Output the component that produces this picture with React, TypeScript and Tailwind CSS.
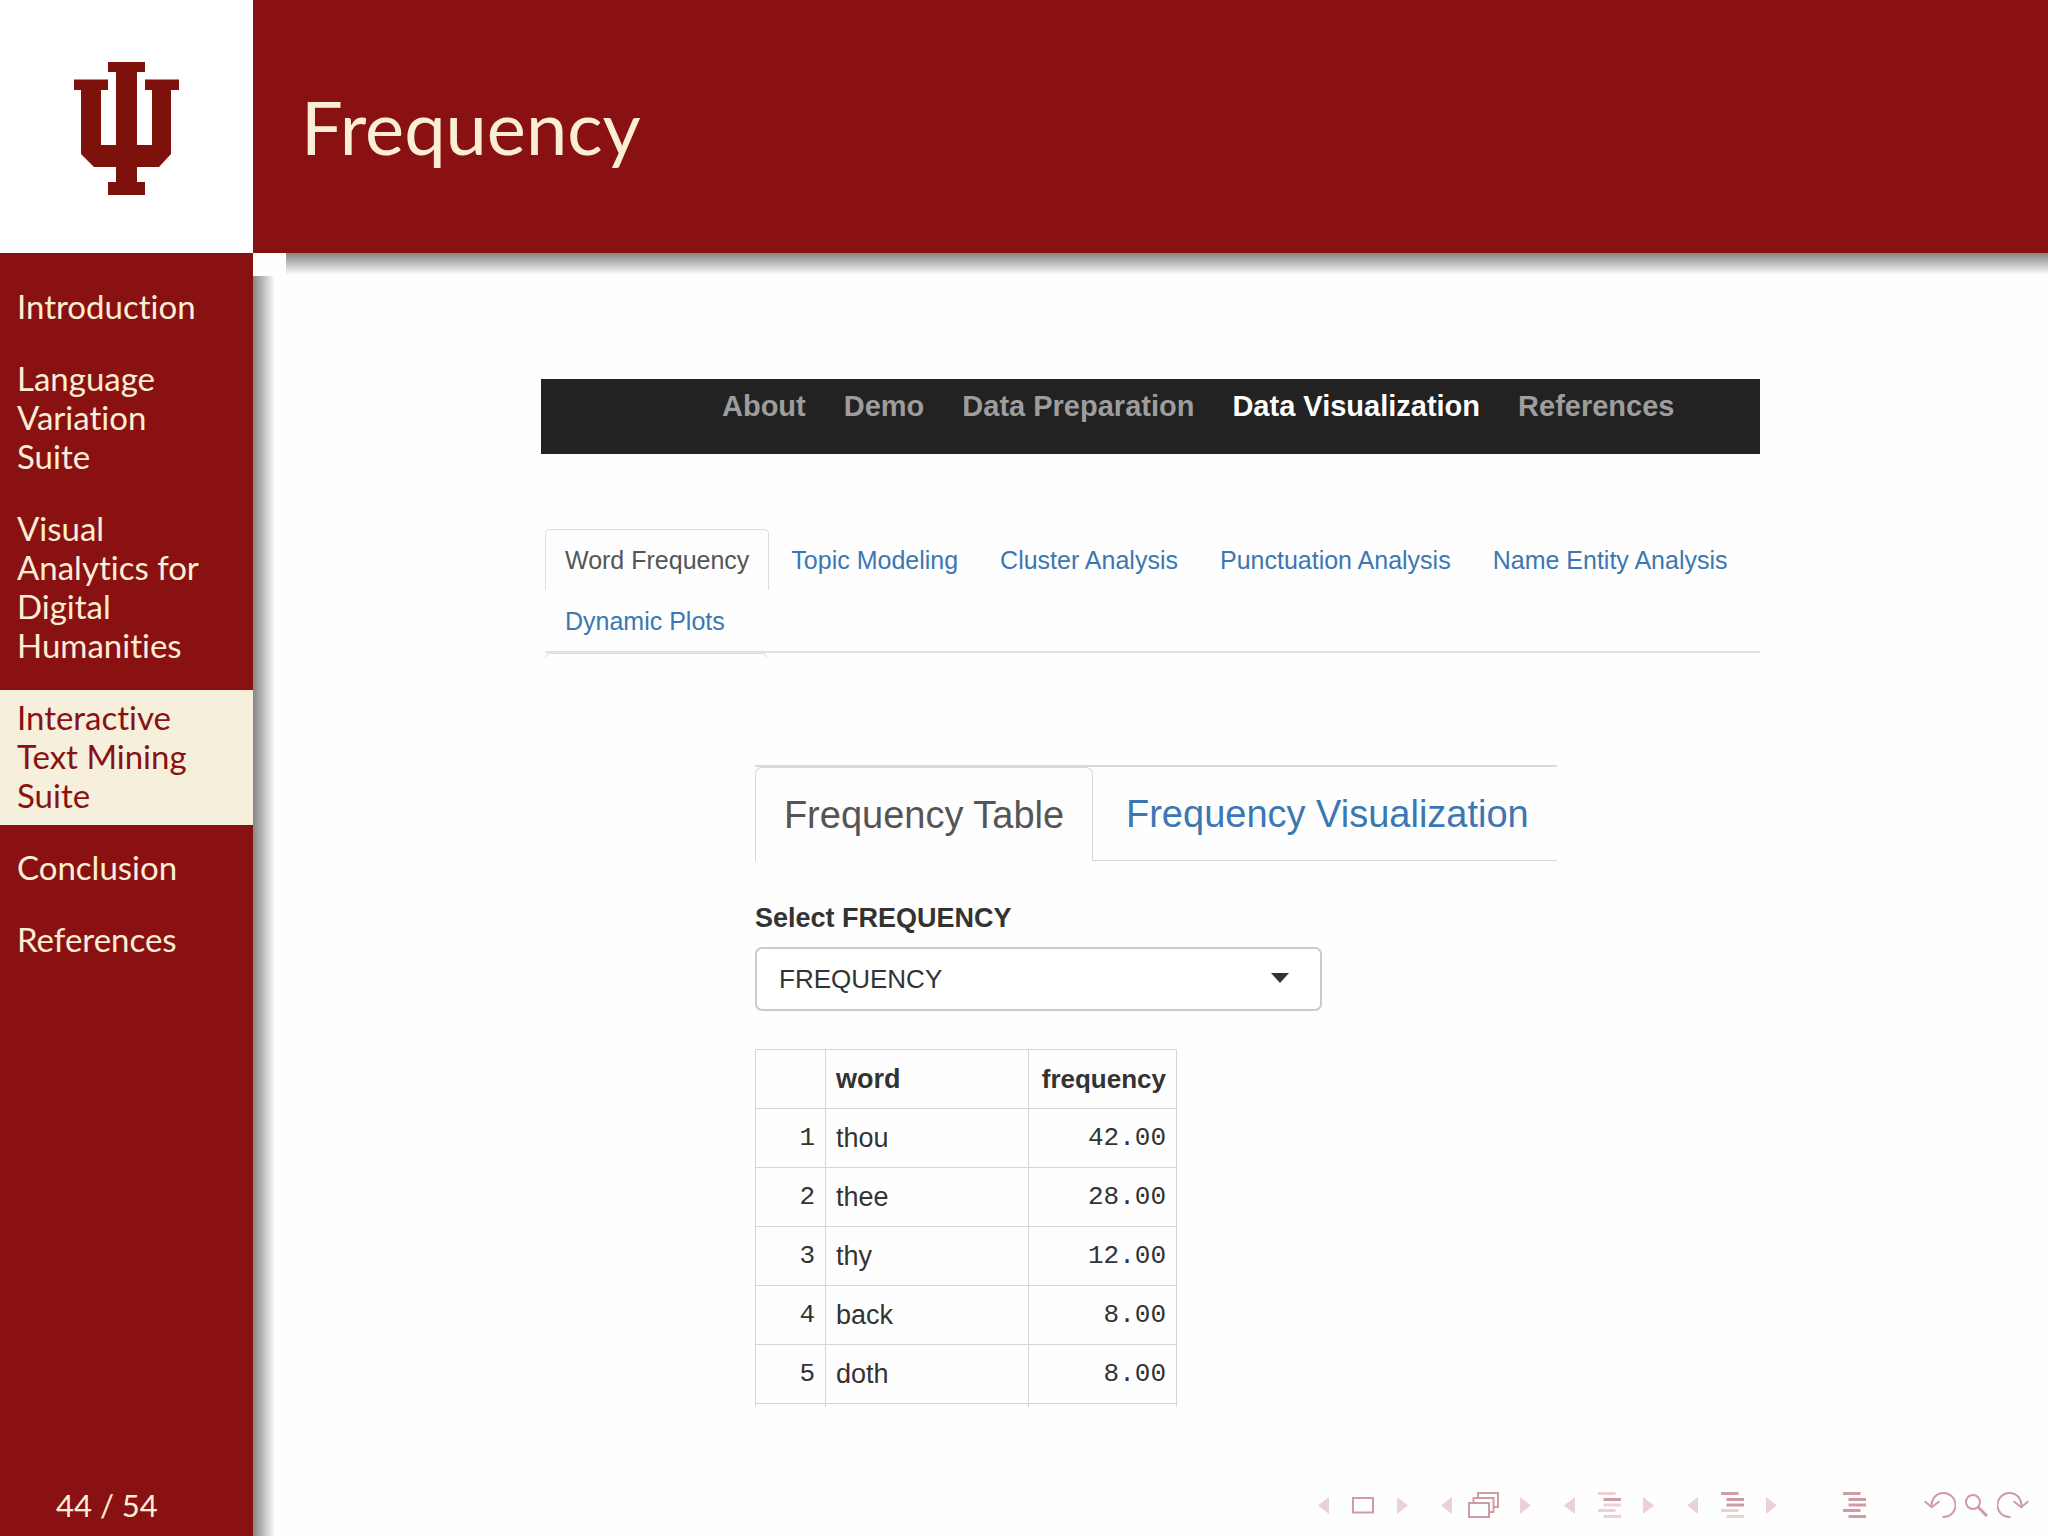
import React, { useState } from 'react';

type Section = { id: string; title: string };

const sections: Section[] = [
  { id: 'intro', title: 'Introduction' },
  { id: 'lvs', title: 'Language Variation Suite' },
  { id: 'visual', title: 'Visual Analytics for Digital Humanities' },
  { id: 'itms', title: 'Interactive Text Mining Suite' },
  { id: 'conclusion', title: 'Conclusion' },
  { id: 'references', title: 'References' },
];

const menuItems = ['About', 'Demo', 'Data Preparation', 'Data Visualization', 'References'];

const analysisTabs = [
  'Word Frequency',
  'Topic Modeling',
  'Cluster Analysis',
  'Punctuation Analysis',
  'Name Entity Analysis',
  'Dynamic Plots',
];

const rows = [
  { word: 'thou', frequency: '42.00' },
  { word: 'thee', frequency: '28.00' },
  { word: 'thy', frequency: '12.00' },
  { word: 'back', frequency: '8.00' },
  { word: 'doth', frequency: '8.00' },
];

const LIGHT = '#ebd0d5';
const DARK = '#cf9ca3';

function Logo() {
  return (
    <svg width="105" height="133" viewBox="0 0 105 133" fill="#7d110c" role="img" aria-label="Indiana University">
      <path d="M34 0H71V10H63V83H78V28H71V17.5H105V28H97V92L85 105H63V120H71V133H34V120H42V105H20L7 92V28H0V17.5H34V28H27V83H42V10H34Z" />
    </svg>
  );
}

function Header({ title }: { title: string }) {
  return (
    <header className="flex h-[253px]">
      <div className="flex w-[253px] shrink-0 items-center justify-center bg-white pt-1">
        <Logo />
      </div>
      <div className="flex flex-1 items-center bg-[#8a1112] pl-[48px]">
        <h1 className="text-[74px] leading-[96px] text-[#fbeed6]">{title}</h1>
      </div>
    </header>
  );
}

function Sidebar() {
  const [active, setActive] = useState('itms');

  return (
    <aside className="flex w-[253px] shrink-0 flex-col justify-between bg-[#8a1112] pt-[26px] pb-[11px] text-[#fbeed6]">
      <nav className="flex flex-col gap-[15px] text-[33px] leading-[39px] [font-variant-ligatures:none]">
        {sections.map((section) => (
          <a
            key={section.id}
            href={`#${section.id}`}
            onClick={() => setActive(section.id)}
            className={
              section.id === active
                ? 'bg-[#f5efdc] pt-[8px] pr-8 pb-[10px] pl-[17px] text-[#8a1112]'
                : 'pt-[8px] pr-8 pb-[10px] pl-[17px]'
            }
          >
            {section.title}
          </a>
        ))}
      </nav>
      <p className="pl-[56px] text-[31px] leading-[39px]">44 / 54</p>
    </aside>
  );
}

function SiteMenu() {
  return (
    <nav className="flex h-[75px] gap-[38px] bg-[#222222] pt-[9px] pl-[181px] text-[29px] leading-[36px] font-bold text-[#9d9d9d]">
      {menuItems.map((item) => (
        <a key={item} href="#" className={item === 'Data Visualization' ? 'text-white' : ''}>
          {item}
        </a>
      ))}
    </nav>
  );
}

function AnalysisTabs() {
  const [tab, setTab] = useState('Word Frequency');

  return (
    <div className="ml-[4px]">
      <div className="flex flex-wrap gap-x-[2px] border-b-2 border-[#e2e2e2] text-[25px] leading-[30px]">
        {analysisTabs.map((name) => (
          <button
            key={name}
            type="button"
            onClick={() => setTab(name)}
            className={
              name === tab
                ? 'h-[61px] rounded-t-[5px] border border-b-0 border-[#dddddd] px-[19px] text-[#555555]'
                : 'h-[61px] border border-transparent px-[19px] text-[#3b77b3]'
            }
          >
            {name}
          </button>
        ))}
      </div>
      <div className="h-[5px] w-[222px] rounded-t-[5px] border border-b-0 border-[#dddddd]" />
    </div>
  );
}

function FrequencyTabs() {
  const [tab, setTab] = useState('Frequency Table');

  return (
    <div className="flex border-t-2 border-[#d9d9dd] text-[38px] leading-[44px]">
      {['Frequency Table', 'Frequency Visualization'].map((name) => (
        <button
          key={name}
          type="button"
          onClick={() => setTab(name)}
          className={
            name === tab
              ? 'h-[94px] w-[338px] rounded-t-[7px] border border-b-0 border-[#d5d5da] text-[#555555]'
              : 'h-[94px] flex-1 border-b border-[#d5d5da] pl-[33px] text-left text-[#3b77b3]'
          }
        >
          {name}
        </button>
      ))}
    </div>
  );
}

function FrequencySelect() {
  return (
    <div className="mt-[39px] w-[567px]">
      <label htmlFor="frequency" className="block text-[27px] leading-[36px] font-bold text-[#333333]">
        Select FREQUENCY
      </label>
      <div className="relative mt-[11px]">
        <select
          id="frequency"
          className="h-[64px] w-full appearance-none rounded-[7px] border-2 border-[#cbcbcf] bg-white pl-[22px] text-[26px] text-[#333333]"
        >
          <option>FREQUENCY</option>
        </select>
        <svg className="pointer-events-none absolute top-[26px] right-[33px]" width="18" height="10" viewBox="0 0 18 10" fill="#333333">
          <path d="M0 0H18L9 10Z" />
        </svg>
      </div>
    </div>
  );
}

function FrequencyTable() {
  return (
    <table className="mt-[38px] w-[422px] table-fixed border-collapse text-[27px] leading-[30px] text-[#333333]">
      <colgroup>
        <col className="w-[70px]" />
        <col className="w-[203px]" />
        <col />
      </colgroup>
      <thead>
        <tr className="h-[59px]">
          <th className="border border-[#d5d4da]" />
          <th className="border border-[#d5d4da] px-[10px] text-left">word</th>
          <th className="border border-[#d5d4da] px-[10px] text-right text-[26px]">frequency</th>
        </tr>
      </thead>
      <tbody>
        {rows.map((row, i) => (
          <tr key={row.word} className="h-[59px]">
            <td className="border border-[#d5d4da] px-[10px] text-right font-['Liberation_Mono',monospace] text-[26px]">
              {i + 1}
            </td>
            <td className="border border-[#d5d4da] px-[10px]">{row.word}</td>
            <td className="border border-[#d5d4da] px-[10px] text-right font-['Liberation_Mono',monospace] text-[26px]">
              {row.frequency}
            </td>
          </tr>
        ))}
        {/* the next row is cut off right below its top border */}
        <tr className="h-[3px]">
          <td className="border border-b-0 border-[#d5d4da]" />
          <td className="border border-b-0 border-[#d5d4da]" />
          <td className="border border-b-0 border-[#d5d4da]" />
        </tr>
      </tbody>
    </table>
  );
}

function Lines({ colors }: { colors: string[] }) {
  const bars = [
    [0, 0],
    [5.5, 6],
    [5.5, 11.5],
    [0, 17],
    [5.5, 23],
  ];
  return (
    <svg width="23" height="26" viewBox="0 0 23 26">
      {bars.map(([x, y], i) => (
        <rect key={y} x={x} y={y} width="17.5" height="3" fill={colors[i]} />
      ))}
    </svg>
  );
}

function Step({ label, children }: { label: string; children: React.ReactNode }) {
  return (
    <div className="flex items-center">
      <button type="button" aria-label={`Previous ${label}`}>
        <svg width="11" height="17" viewBox="0 0 11 17" fill={LIGHT}>
          <path d="M11 0V17L0 8.5Z" />
        </svg>
      </button>
      <span className="flex w-[68px] justify-center">{children}</span>
      <button type="button" aria-label={`Next ${label}`}>
        <svg width="11" height="17" viewBox="0 0 11 17" fill={LIGHT}>
          <path d="M0 0V17L11 8.5Z" />
        </svg>
      </button>
    </div>
  );
}

function NavigationSymbols() {
  return (
    <div className="mt-auto flex items-center justify-end pr-[19px] pb-[18px]">
      <div className="flex gap-[33px]">
        <Step label="slide">
          <svg width="22" height="26" viewBox="0 0 22 26" fill="none" stroke={DARK} strokeWidth="2">
            <rect x="1" y="6" width="20" height="14.5" />
          </svg>
        </Step>
        <Step label="frame">
          <svg width="36" height="26" viewBox="0 0 36 26" fill="#fefefe" stroke={DARK} strokeWidth="2">
            <rect x="10" y="1" width="20" height="14" />
            <rect x="5.5" y="6" width="20" height="14" />
            <rect x="1" y="11" width="20" height="14" />
          </svg>
        </Step>
        <Step label="subsection">
          <Lines colors={[LIGHT, DARK, LIGHT, LIGHT, LIGHT]} />
        </Step>
        <Step label="section">
          <Lines colors={[DARK, DARK, DARK, LIGHT, LIGHT]} />
        </Step>
      </div>
      <button type="button" aria-label="Presentation" className="ml-[66px]">
        <Lines colors={[DARK, DARK, DARK, DARK, DARK]} />
      </button>
      <div className="ml-[58px] flex gap-[9px]">
        <button type="button" aria-label="Back">
          <svg width="32" height="26" viewBox="0 0 32 26" fill="none" stroke={DARK} strokeWidth="2">
            <path d="M18.5 25A12 12 0 1 0 7.7 15" />
            <path d="M0.7 9.3L7.7 15.3L15.4 9.3" />
          </svg>
        </button>
        <button type="button" aria-label="Search">
          <svg width="23" height="26" viewBox="0 0 23 26" fill="none" stroke={DARK}>
            <circle cx="8" cy="10" r="7" strokeWidth="2" />
            <path d="M13 15L22 24" strokeWidth="3" />
          </svg>
        </button>
        <button type="button" aria-label="Forward">
          <svg width="32" height="26" viewBox="0 0 32 26" fill="none" stroke={DARK} strokeWidth="2">
            <path d="M13.5 25A12 12 0 1 1 24.3 15" />
            <path d="M31.3 9.3L24.3 15.3L16.6 9.3" />
          </svg>
        </button>
      </div>
    </div>
  );
}

function App() {
  return (
    <div className="flex min-h-screen flex-col bg-[#fefefe] font-['Lato',sans-serif]">
      <Header title="Frequency" />
      <div className="flex flex-1">
        <Sidebar />
        <main className="relative flex flex-1 flex-col pt-[126px] font-['Liberation_Sans',Arial,sans-serif]">
          <div className="absolute top-0 right-0 left-[33px] h-[22px] bg-linear-to-b from-[#858786] to-[#fefefe]" />
          <div className="absolute top-[23px] bottom-0 left-0 w-[22px] bg-linear-to-r from-[#858786] to-[#fefefe]" />
          <div className="mx-auto flex w-[1219px] flex-col gap-[75px]">
            <SiteMenu />
            <AnalysisTabs />
          </div>
          <div className="mx-auto mt-[107px] pl-[11px]">
            <div className="w-[802px]">
              <FrequencyTabs />
              <FrequencySelect />
              <FrequencyTable />
            </div>
          </div>
          <NavigationSymbols />
        </main>
      </div>
    </div>
  );
}

export default App;
